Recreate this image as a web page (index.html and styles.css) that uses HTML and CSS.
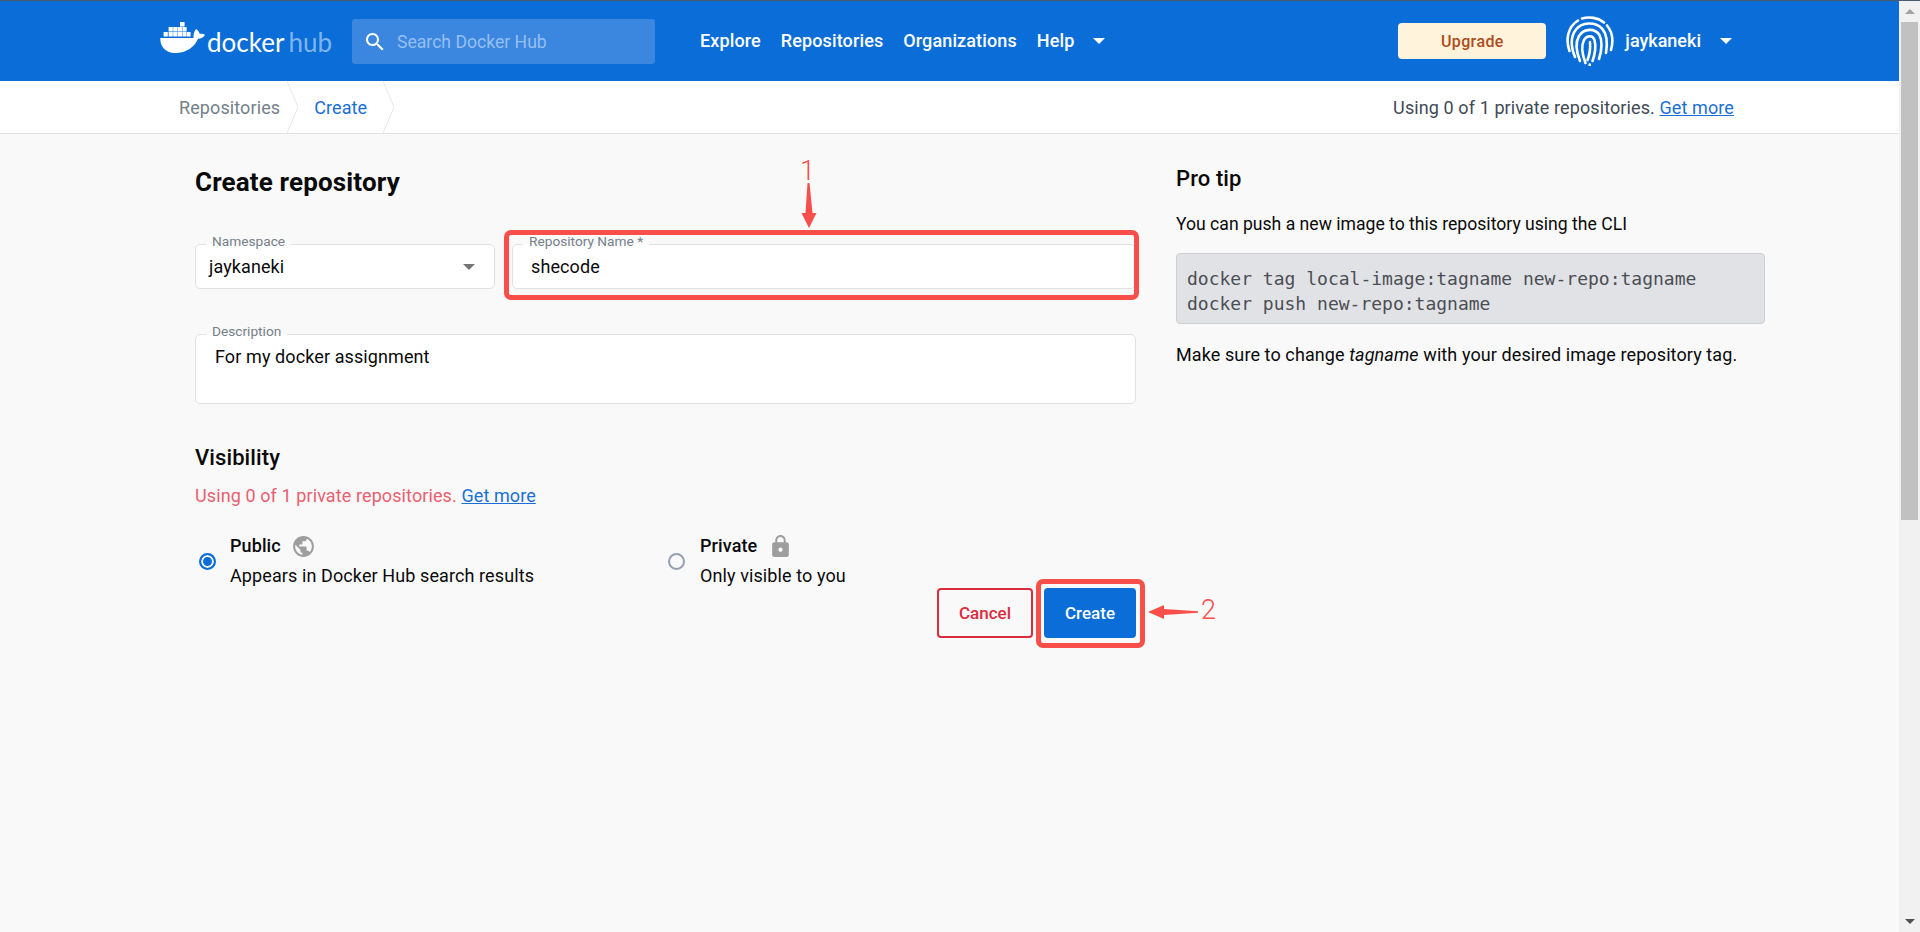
FILE: index.html
```html
<!DOCTYPE html>
<html>
<head>
    <title>Create repository</title>
    <link rel="stylesheet" href="styles.css">
</head>
<body>
    <div class="page">
        <header class="topbar">
            <a class="logo">
                <svg class="whale" width="45" height="32" viewBox="0 0 45 32">
                    <path fill="#fff" d="M20 0h4.6v4.4H20zM8.6 5h4.2v4.4H8.6zM13.2 5h4.2v4.4h-4.2zM17.8 5h4.2v4.4h-4.2zM22.4 5h4.2v4.4h-4.2zM3.6 10h4.2v4.4H3.6zM8.6 10h4.2v4.4H8.6zM13.2 10h4.2v4.4h-4.2zM17.8 10h4.2v4.4h-4.2zM22.4 10h4.2v4.4h-4.2zM27 10h3.6v4.4H27z"/>
                    <path fill="#fff" d="M0.3 16H33.5C33.2 13 34 9.5 36 7C38.5 8.5 39.5 10.5 39.7 12C41.5 11.5 43.5 11.7 45 12.8C43.8 15.5 41 16.8 38 16.8C34.5 25 27 31 15 31C5 31 0 24 0.3 16Z"/>
                </svg>
                <span class="logo-docker">docker</span>
                <span class="logo-hub">hub</span>
            </a>
            <div class="search">
                <svg width="24" height="24" viewBox="0 0 24 24"><path fill="#fff" d="M15.5 14h-.79l-.28-.27C15.41 12.59 16 11.11 16 9.5 16 5.91 13.09 3 9.5 3S3 5.91 3 9.5 5.91 16 9.5 16c1.61 0 3.09-.59 4.23-1.57l.27.28v.79l5 4.99L20.49 19l-4.99-5zm-6 0C7.01 14 5 11.99 5 9.5S7.01 5 9.5 5 14 7.01 14 9.5 11.99 14 9.5 14z"/></svg>
                <span>Search Docker Hub</span>
            </div>
            <nav class="mainnav">
                <a>Explore</a>
                <a>Repositories</a>
                <a>Organizations</a>
                <a>Help</a>
                <span class="caret"></span>
            </nav>
            <div class="account">
                <button class="upgrade">Upgrade</button>
                <svg class="avatar" width="50" height="50" viewBox="0 0 50 50" fill="none" stroke="#fff" stroke-width="2.6" stroke-linecap="round">
                    <path d="M4.5 35C0.5 24 2.5 11 13 4.5"/>
                    <path d="M17 2.5C24 0.5 33 1.5 39 6.5"/>
                    <path d="M42 9.5C47.5 16 48.5 25 46 34"/>
                    <path d="M10 41C5.5 30 6 20 11 13.5C17 6 30 5.5 37 12.5C42.5 18.5 42.5 28 41 37"/>
                    <path d="M15 45C11 35 10.5 26 14 20C19 12 30 12 34.5 19C37.5 25 36.5 35 34 43"/>
                    <path d="M20.5 47C17 38 16 30 19 24C22 19 28 19 29.5 24C31 30 30 38 27.5 45"/>
                    <path d="M25 26C25.5 32 24.5 39 22.5 44"/>
                    <path d="M24.7 48.6v0.3"/>
                </svg>
                <span class="username">jaykaneki</span>
                <span class="caret caret-user"></span>
            </div>
        </header>

        <div class="subnav">
            <a class="crumb">Repositories</a>
            <svg class="chevron" width="11" height="52" viewBox="0 0 11 52"><polyline points="0,0 11,26 0,52"/></svg>
            <a class="crumb crumb-active">Create</a>
            <svg class="chevron chevron-last" width="11" height="52" viewBox="0 0 11 52"><polyline points="0,0 11,26 0,52"/></svg>
            <p class="usage">Using 0 of 1 private repositories. <a class="link">Get more</a></p>
        </div>

        <main class="content">
            <form class="repo-form">
                <h1>Create repository</h1>
                <div class="name-row">
                    <fieldset class="field">
                        <legend>Namespace</legend>
                        <div class="value value-select">jaykaneki <span class="select-caret"></span></div>
                    </fieldset>
                    <fieldset class="field">
                        <legend>Repository Name *</legend>
                        <div class="value value-name">shecode</div>
                    </fieldset>
                </div>
                <fieldset class="field field-desc">
                    <legend>Description</legend>
                    <div class="value value-desc">For my docker assignment</div>
                </fieldset>

                <h2 class="visibility-title">Visibility</h2>
                <p class="notice">Using 0 of 1 private repositories. <a class="link">Get more</a></p>
                <div class="options">
                    <div class="option option-public">
                        <span class="radio radio-on"></span>
                        <div>
                            <div class="option-name">Public
                                <svg width="25" height="25" viewBox="0 0 24 24"><path fill="#9e9e9e" d="M12 2C6.48 2 2 6.48 2 12s4.48 10 10 10 10-4.48 10-10S17.52 2 12 2zm-1 17.93c-3.95-.49-7-3.85-7-7.93 0-.62.08-1.21.21-1.79L9 15v1c0 1.1.9 2 2 2v1.93zm6.9-2.54c-.26-.81-1-1.39-1.9-1.39h-1v-3c0-.55-.45-1-1-1H8v-2h2c.55 0 1-.45 1-1V7h2c1.1 0 2-.9 2-2v-.41c2.93 1.19 5 4.06 5 7.41 0 2.08-.8 3.97-2.1 5.39z"/></svg>
                            </div>
                            <div class="option-text">Appears in Docker Hub search results</div>
                        </div>
                    </div>
                    <div class="option option-private">
                        <span class="radio"></span>
                        <div>
                            <div class="option-name">Private
                                <svg width="25" height="25" viewBox="0 0 24 24"><path fill="#9e9e9e" d="M18 8h-1V6c0-2.76-2.24-5-5-5S7 3.24 7 6v2H6c-1.1 0-2 .9-2 2v10c0 1.1.9 2 2 2h12c1.1 0 2-.9 2-2V10c0-1.1-.9-2-2-2zm-6 9c-1.1 0-2-.9-2-2s.9-2 2-2 2 .9 2 2-.9 2-2 2zm3.1-9H8.9V6c0-1.71 1.39-3.1 3.1-3.1 1.71 0 3.1 1.39 3.1 3.1v2z"/></svg>
                            </div>
                            <div class="option-text">Only visible to you</div>
                        </div>
                    </div>
                </div>
                <div class="actions">
                    <button type="button" class="btn btn-cancel">Cancel</button>
                    <button type="button" class="btn btn-create">Create</button>
                </div>
            </form>

            <aside class="tip">
                <h2>Pro tip</h2>
                <p class="tip-first">You can push a new image to this repository using the CLI</p>
                <pre class="code">docker tag local-image:tagname new-repo:tagname
docker push new-repo:tagname</pre>
                <p>Make sure to change <em>tagname</em> with your desired image repository tag.</p>
            </aside>
        </main>
    </div>

    <div class="scrollbar">
        <div class="scroll-btn"><span class="arrow-up"></span></div>
        <div class="scroll-thumb"></div>
        <div class="scroll-rest"></div>
        <div class="scroll-btn scroll-btn-down"><span class="arrow-down"></span></div>
    </div>

    <!-- annotations drawn over the screenshot -->
    <div class="mark mark-name"></div>
    <div class="mark mark-create"></div>
    <span class="mark-num mark-num-1">1</span>
    <span class="mark-num mark-num-2">2</span>
    <svg class="mark-arrow mark-arrow-1" width="16" height="46" viewBox="0 0 16 46"><path fill="#f94f4a" d="M6.5 0h2L11.5 30h4L8 45 0.5 30h4z"/></svg>
    <svg class="mark-arrow mark-arrow-2" width="50" height="16" viewBox="0 0 50 16"><path fill="#f94f4a" d="M0 8 16 1V5L50 7.2V8.8L16 11V15z"/></svg>
</body>
</html>
```

FILE: styles.css
```css
* {
    box-sizing: border-box;
}
html, body {
    height: 100%;
}
body {
    margin: 0;
    display: flex;
    overflow: hidden;
    border-top: 1px solid #4b5a6b;
    background-color: #f9f9f9;
    color: #0a0a0a;
    font-family: Roboto, "Liberation Sans", sans-serif;
    font-size: 18px;
    line-height: 24px;
    letter-spacing: 0.1px;
}
p, h1, h2 {
    margin: 0;
}
.page {
    flex: 1;
    min-width: 0;
}

/* top bar */
.topbar {
    display: flex;
    align-items: center;
    height: 80px;
    padding: 0 167px 0 160px;
    background-color: #0b6dd8;
    color: white;
}
.logo {
    display: flex;
    align-items: baseline;
    width: 172px;
    height: 32px;
    margin-top: -6px;
    margin-right: 20px;
    font-family: Lato, sans-serif;
    font-size: 26px;
    line-height: 32px;
    letter-spacing: 0;
}
.whale {
    align-self: flex-start;
    flex: none;
    margin-right: 2px;
}
.logo-docker {
    margin-top: 4px;
}
.logo-hub {
    margin-left: 4px;
    color: #80b4ed;
}
.search {
    display: flex;
    align-items: center;
    width: 303px;
    height: 45px;
    margin-top: 1px;
    padding-left: 11px;
    background-color: #3b87e0;
    border-radius: 3px;
    color: #96bff0;
    font-size: 17.6px;
    letter-spacing: 0;
}
.search span {
    margin-left: 10px;
}
.mainnav {
    display: flex;
    align-items: center;
    gap: 20px;
    margin-left: 45px;
    font-weight: 500;
    letter-spacing: 0.12px;
}
.caret {
    width: 0;
    height: 0;
    margin-left: -1px;
    border-top: 6px solid white;
    border-left: 6.5px solid transparent;
    border-right: 6.5px solid transparent;
}
.account {
    display: flex;
    align-items: center;
    margin-left: auto;
    font-weight: 500;
    letter-spacing: 0;
}
.upgrade {
    width: 148px;
    height: 36px;
    margin-right: 19px;
    border: none;
    border-radius: 4px;
    background-color: #fff3dc;
    color: #ac4c1b;
    font-family: inherit;
    font-size: 16px;
    font-weight: 500;
    letter-spacing: 0.4px;
}
.avatar {
    margin-right: 10px;
}
.caret-user {
    margin-left: 19px;
}

/* breadcrumb bar */
.subnav {
    display: flex;
    align-items: center;
    height: 53px;
    padding: 2px 165px 0 179px;
    background-color: white;
    border-bottom: 1px solid #e2e2e2;
    color: #3f4a55;
}
.crumb {
    color: #76808a;
}
.crumb-active {
    color: #1a6fd6;
}
.chevron {
    margin: -2px 16px 0 7px;
}
.chevron-last {
    margin-left: 16px;
}
.chevron polyline {
    fill: none;
    stroke: #e6e6e6;
    stroke-width: 1;
}
.usage {
    margin-left: auto;
}
.link {
    color: #1a6fd6;
    text-decoration: underline;
}

/* form */
.content {
    display: grid;
    grid-template-columns: 941px 589px;
    gap: 40px;
    padding-left: 195px;
}
.repo-form {
    padding-top: 32px;
}
h1 {
    font-size: 26px;
    font-weight: 700;
    line-height: 32px;
    letter-spacing: 0.15px;
}
.name-row {
    display: grid;
    grid-template-columns: 300px 624px;
    gap: 17px;
    margin-top: 36px;
}
.field {
    margin: 0;
    padding: 0;
    min-width: 0;
    height: 55px;
    background-color: white;
    border: 1px solid #e1e1e4;
    border-radius: 5px;
}
.field legend {
    margin-left: 10px;
    padding: 0 6px 5px;
    color: #76808a;
    font-size: 13.7px;
    line-height: 15px;
    letter-spacing: 0;
}
.field-desc {
    height: 80px;
    margin-top: 35px;
}
.value {
    margin-top: -2px;
    padding: 0 18px;
    line-height: 30px;
}
.value-desc {
    padding: 0 19px;
}
.value-select {
    display: flex;
    align-items: center;
    justify-content: space-between;
    padding: 0 19px 0 13px;
}
.select-caret {
    border-top: 6px solid #757575;
    border-left: 6.5px solid transparent;
    border-right: 6.5px solid transparent;
}

.visibility-title {
    margin-top: 38px;
    padding-top: 1px;
    height: 30px;
}
h2 {
    font-size: 22px;
    font-weight: 500;
    line-height: 30px;
}
.notice {
    margin-top: 12px;
    color: #ea6070;
}
.options {
    display: flex;
    margin-top: 26px;
    padding-left: 4px;
}
.option {
    display: flex;
    align-items: center;
    gap: 15px;
    width: 471px;
}
.option-public {
    gap: 14px;
    width: 472px;
}
.option-private .option-name {
    gap: 11px;
}
.radio {
    flex: none;
    width: 17px;
    height: 17px;
    border: 2px solid #959fb3;
    border-radius: 50%;
}
.radio-on {
    border-color: #0b6dd8;
    background-color: #0b6dd8;
    box-shadow: inset 0 0 0 2px #f9f9f9;
}
.option-name {
    display: flex;
    align-items: center;
    gap: 10px;
    height: 24px;
    font-weight: 500;
}
.option-text {
    margin-top: 6px;
}
.actions {
    display: flex;
    justify-content: flex-end;
    gap: 11px;
}
.btn {
    height: 50px;
    border-radius: 4px;
    font-family: inherit;
    font-size: 17px;
    font-weight: 500;
    letter-spacing: 0;
}
.btn-cancel {
    width: 96px;
    background-color: transparent;
    border: 2px solid #db2b3d;
    color: #db2b3d;
}
.btn-create {
    width: 92px;
    background-color: #0b6dd8;
    border: none;
    color: white;
}

/* pro tip */
.tip {
    padding-top: 30px;
}
.tip-first {
    margin-top: 18px;
    font-size: 17.6px;
    letter-spacing: 0;
}
.code {
    height: 71px;
    margin: 17px 0 19px;
    padding: 12px 10px 6px;
    background-color: #e1e2e6;
    border: 1px solid #cfd0d6;
    border-radius: 4px;
    color: #4b4e53;
    font-family: "DejaVu Sans Mono", monospace;
    font-size: 18px;
    line-height: 25px;
    letter-spacing: 0;
}

/* scrollbar */
.scrollbar {
    display: flex;
    flex-direction: column;
    flex: none;
    width: 21px;
    background-color: #f1f1f1;
}
.scroll-btn {
    display: flex;
    justify-content: center;
    align-items: center;
    height: 21px;
}
.scroll-btn-down {
    height: 22px;
}
.arrow-up {
    border-bottom: 5px solid #a3a3a3;
    border-left: 5px solid transparent;
    border-right: 5px solid transparent;
}
.arrow-down {
    border-top: 5px solid #505050;
    border-left: 5px solid transparent;
    border-right: 5px solid transparent;
}
.scroll-thumb {
    height: 498px;
    margin: 0 2px;
    background-color: #c1c1c1;
}
.scroll-rest {
    flex: 1;
}

/* annotations */
.mark {
    position: absolute;
    border: 5px solid #f94f4a;
    border-radius: 7px;
}
.mark-name {
    left: 504px;
    top: 230px;
    width: 635px;
    height: 70px;
}
.mark-create {
    left: 1036px;
    top: 579px;
    width: 109px;
    height: 69px;
}
.mark-num {
    position: absolute;
    color: #f94f4a;
    font-size: 27px;
    font-weight: 300;
    line-height: 30px;
}
.mark-num-1 {
    left: 800px;
    top: 156px;
}
.mark-num-2 {
    left: 1201px;
    top: 595px;
}
.mark-arrow {
    position: absolute;
}
.mark-arrow-1 {
    left: 801px;
    top: 183px;
}
.mark-arrow-2 {
    left: 1148px;
    top: 604px;
}
```
